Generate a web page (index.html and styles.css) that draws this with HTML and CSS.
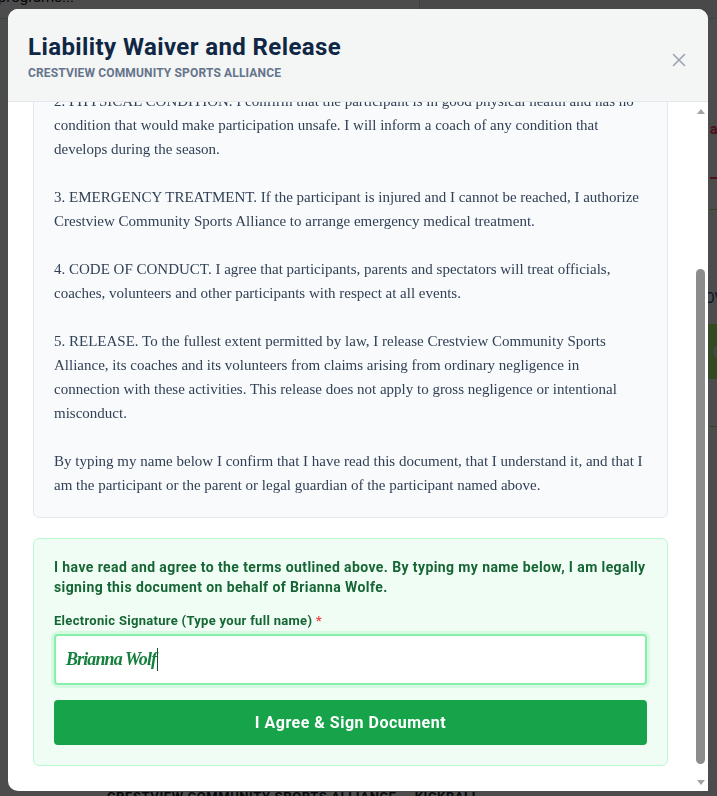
FILE: index.html
```html
<!DOCTYPE html>
<html lang="en">
<head>
<meta charset="utf-8">
<title>Liability Waiver and Release</title>
<link rel="stylesheet" href="styles.css">
</head>
<body>
<div class="page">
  <div class="topbar">
    <div class="search">Search programs...</div>
    <div class="topbar-side"></div>
  </div>
  <div class="content">
    <main class="main">
      <div class="main-spacer"></div>
      <div class="footer-title">CRESTVIEW COMMUNITY SPORTS ALLIANCE — KICKBALL</div>
    </main>
    <aside class="side">
      <div class="side-head">about this program</div>
      <div class="side-line"></div>
      <div class="side-label">OVERVIEW</div>
      <div class="side-btn">Go to registration</div>
      <div class="side-line side-line-low"></div>
    </aside>
  </div>
</div>

<div class="overlay">
  <div class="modal" role="dialog" aria-labelledby="waiver-title">
    <header class="modal-header">
      <div class="heading">
        <h2 id="waiver-title" class="title">Liability Waiver and Release</h2>
        <div class="subtitle">CRESTVIEW COMMUNITY SPORTS ALLIANCE</div>
      </div>
      <button class="close" aria-label="Close">
        <svg width="14" height="14" viewBox="0 0 14 14"><path d="M1.5 1.5 L12.5 12.5 M12.5 1.5 L1.5 12.5" stroke="#9ca3af" stroke-width="1.6" stroke-linecap="round" fill="none"/></svg>
      </button>
    </header>
    <div class="modal-main">
      <div class="modal-body">
        <div class="body-inner">
          <div class="doc">
            <p>PARTICIPANT WAIVER, RELEASE OF LIABILITY AND ASSUMPTION OF RISK</p>
            <p>1. ASSUMPTION OF RISK. I understand that kickball and the practices, games, travel and other activities of Crestview Community Sports Alliance involve running, throwing, kicking and contact with other players, and that these activities carry an inherent risk of injury. I voluntarily accept these risks on behalf of the participant named below.</p>
            <p>2. PHYSICAL CONDITION. I confirm that the participant is in good physical health and has no condition that would make participation unsafe. I will inform a coach of any condition that develops during the season.</p>
            <p>3. EMERGENCY TREATMENT. If the participant is injured and I cannot be reached, I authorize Crestview Community Sports Alliance to arrange emergency medical treatment.</p>
            <p>4. CODE OF CONDUCT. I agree that participants, parents and spectators will treat officials, coaches, volunteers and other participants with respect at all events.</p>
            <p>5. RELEASE. To the fullest extent permitted by law, I release Crestview Community Sports Alliance, its coaches and its volunteers from claims arising from ordinary negligence in connection with these activities. This release does not apply to gross negligence or intentional misconduct.</p>
            <p>By typing my name below I confirm that I have read this document, that I understand it, and that I am the participant or the parent or legal guardian of the participant named above.</p>
          </div>
          <div class="sign">
            <p class="agree">I have read and agree to the terms outlined above. By typing my name below, I am legally signing this document on behalf of Brianna Wolfe.</p>
            <label class="sig-label">Electronic Signature (Type your full name) <span class="req">*</span></label>
            <div class="sig-input"><span class="sig-text">Brianna Wolf</span><span class="caret"></span></div>
            <button class="sign-btn">I Agree &amp; Sign Document</button>
          </div>
        </div>
      </div>
      <div class="scrollbar" aria-hidden="true">
        <div class="sb-btn"><span class="tri-up"></span></div>
        <div class="sb-track"><div class="sb-thumb"></div></div>
        <div class="sb-btn"><span class="tri-down"></span></div>
      </div>
    </div>
  </div>
</div>
</body>
</html>
```

FILE: styles.css
```css
* { box-sizing: border-box; }

html, body {
  margin: 0;
  height: 100%;
  overflow: hidden;
}

body {
  font-family: Roboto, "Noto Sans", "Liberation Sans", sans-serif;
  background: #ffffff;
  color: #1f2937;
}

/* ---------- background page (under the overlay) ---------- */
.page {
  margin-top: -12px;
}

.topbar {
  display: flex;
  height: 31px;
  border-bottom: 1px solid #d1d5db;
}

.search {
  width: 420px;
  border-right: 1px solid #d1d5db;
  font-size: 15px;
  line-height: 18px;
  color: #111827;
  text-indent: -52px;
}

.topbar-side {
  flex: 1;
  background: #f3f4f6;
}

.content {
  display: grid;
  grid-template-columns: 697px 300px;
}

.main-spacer {
  height: 770px;
}

.footer-title {
  padding-left: 107px;
  font-size: 13px;
  font-weight: 700;
  letter-spacing: 0.6px;
  color: #111827;
}

.side {
  padding: 102px 0 0 13px;
  display: flex;
  flex-direction: column;
}

.side-head {
  font-size: 14px;
  font-weight: 700;
  color: #ff2f60;
  padding-bottom: 40px;
  border-bottom: 2px solid #ff3b5c;
}

.side-line {
  height: 1px;
  background: #9fe08a;
  margin-top: 30px;
}

.side-line-low {
  margin-top: 47px;
}

.side-label {
  margin-top: 80px;
  font-size: 14px;
  color: #1e3a8a;
  margin-left: -5px;
}

.side-btn {
  margin: 18px 0 0 -5px;
  height: 55px;
  display: flex;
  align-items: center;
  padding-left: 8px;
  background: #a7f56e;
  color: #f3f4f6;
  font-weight: 700;
  font-size: 15px;
}

/* ---------- overlay + modal ---------- */
.overlay {
  position: fixed;
  inset: 0;
  background: rgba(0, 0, 0, 0.7);
  display: flex;
  align-items: flex-start;
  padding: 9px 9px 0 8px;
}

.modal {
  width: 700px;
  height: 782px;
  background: #ffffff;
  border-radius: 10px 10px 0 10px;
  display: flex;
  flex-direction: column;
}

.modal-header {
  flex: none;
  display: flex;
  justify-content: space-between;
  align-items: center;
  padding: 24px 22px 20px 20px;
  background: #f4f5f5;
  border-bottom: 1px solid #e5e7eb;
  border-radius: 10px 10px 0 0;
}

.title {
  margin: 0;
  font-size: 24px;
  line-height: 29px;
  font-weight: 700;
  color: #0f2744;
  letter-spacing: 0.4px;
}

.subtitle {
  margin-top: 3px;
  font-size: 12px;
  line-height: 16px;
  font-weight: 700;
  color: #64748b;
  letter-spacing: 0.15px;
}

.close {
  border: 0;
  background: none;
  padding: 0;
  margin-top: 6px;
  width: 14px;
  height: 14px;
  display: flex;
}

.modal-main {
  flex: 1;
  min-height: 0;
  display: flex;
}

.modal-body {
  flex: 1;
  min-width: 0;
  overflow-y: auto;
  scrollbar-width: none;
  display: flex;
  flex-direction: column-reverse;
  border-radius: 0 0 0 10px;
}

.modal-body::-webkit-scrollbar { display: none; }

/* drawn scrollbar (scrolled to bottom) */
.scrollbar {
  flex: none;
  width: 15px;
  display: flex;
  flex-direction: column;
  background: #ffffff;
}

.sb-btn {
  height: 15px;
  display: flex;
  align-items: center;
  justify-content: center;
}

.tri-up {
  width: 0;
  height: 0;
  border-left: 4.5px solid transparent;
  border-right: 4.5px solid transparent;
  border-bottom: 5px solid #a3a3a3;
  margin-top: 3px;
}

.tri-down {
  width: 0;
  height: 0;
  border-left: 4.5px solid transparent;
  border-right: 4.5px solid transparent;
  border-top: 5px solid #a3a3a3;
  margin-top: -2px;
}

.sb-track {
  flex: 1;
  display: flex;
  flex-direction: column;
  align-items: center;
  padding-top: 152px;
}

.sb-thumb {
  width: 9px;
  height: 495px;
  border-radius: 5px;
  background: #8c8c8c;
}

.body-inner {
  padding: 25px;
}

.doc {
  background: #f8fafc;
  border: 1px solid #e2e8f0;
  border-radius: 6px;
  padding: 20px;
  font-family: "Liberation Serif", "Times New Roman", serif;
  font-size: 15px;
  line-height: 24px;
  color: #334155;
}

.doc p {
  margin: 0 0 24px;
}

.doc p:last-child {
  margin-bottom: 0;
}

.sign {
  margin-top: 20px;
  background: #f0fdf4;
  border: 1px solid #bbf7d0;
  border-radius: 6px;
  padding: 18px 20px 20px;
}

.agree {
  margin: 0 0 16px;
  font-size: 14px;
  line-height: 20px;
  font-weight: 700;
  letter-spacing: 0.4px;
  color: #166534;
}

.sig-label {
  display: block;
  font-size: 13px;
  line-height: 16px;
  font-weight: 700;
  letter-spacing: 0.3px;
  color: #166534;
  margin-bottom: 5px;
}

.req {
  color: #ef4444;
}

.sig-input {
  height: 51px;
  display: flex;
  align-items: center;
  padding: 0 10px;
  background: #ffffff;
  border: 2px solid #86efac;
  border-radius: 4px;
  box-shadow: 0 0 0 3px rgba(134, 239, 172, 0.25);
}

.sig-text {
  font-family: "Liberation Serif", "Times New Roman", serif;
  font-style: italic;
  font-weight: 700;
  font-size: 18px;
  letter-spacing: -0.9px;
  color: #15803d;
}

.caret {
  width: 1px;
  height: 23px;
  background: #14532d;
  margin-left: 1px;
}

.sign-btn {
  display: block;
  width: 100%;
  margin-top: 15px;
  height: 45px;
  border: 0;
  border-radius: 4px;
  background: #16a34a;
  color: #ffffff;
  font-family: inherit;
  font-size: 16px;
  font-weight: 700;
  letter-spacing: 0.5px;
}
```
